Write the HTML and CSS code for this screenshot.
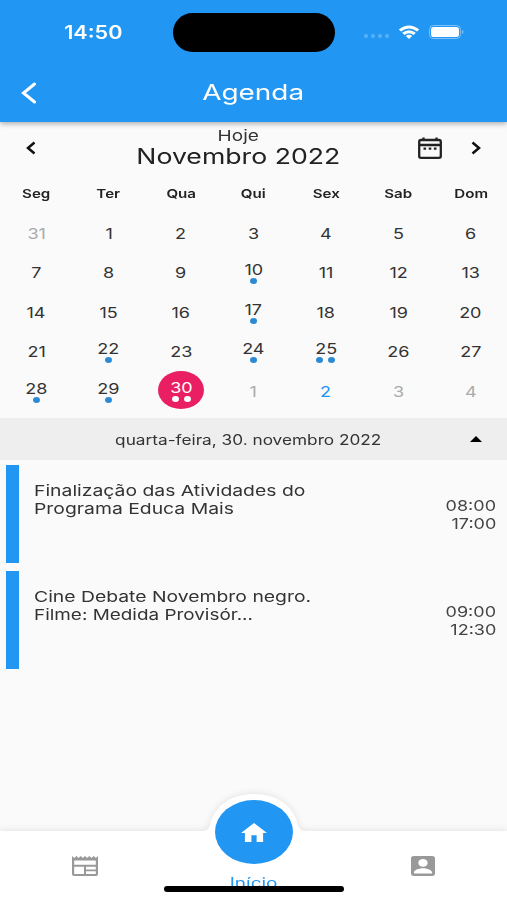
FILE: index.html
```html
<!DOCTYPE html>
<html lang="pt-BR">
<head>
  <meta charset="UTF-8">
  <meta name="viewport" content="width=device-width, initial-scale=1.0">
  <title>Agenda</title>
  <link rel="stylesheet" href="styles.css">
</head>
<body>
  <header class="header">
    <div class="status-bar">
      <div class="clock"><span>14:50</span></div>
      <div class="island"></div>
      <div class="status-icons">
        <div class="signal"><i></i><i></i><i></i><i></i></div>
        <svg class="wifi" viewBox="0 0 22 14" preserveAspectRatio="none">
          <path d="M0.8 4.5Q11 -3.5 21.2 4.5L19 6.6Q11 0.4 3 6.6Z" />
          <path d="M4.2 7.8Q11 2.6 17.8 7.8L15.6 9.9Q11 6.5 6.4 9.9Z" />
          <path d="M7.8 11Q11 8.6 14.2 11L11 14Z" />
        </svg>
        <svg class="battery" viewBox="0 0 35 14">
          <rect class="battery-case" x="0.5" y="0.5" width="31" height="13" rx="4" />
          <rect x="2" y="2" width="28" height="10" rx="2.8" />
          <path class="battery-tip" d="M33 5v4q1.5-.6 1.5-2T33 5z" />
        </svg>
      </div>
    </div>
    <div class="app-bar">
      <svg class="back" viewBox="0 0 16 22"><path d="M13.5 2L2.5 11L13.5 20" /></svg>
      <h1><span>Agenda</span></h1>
    </div>
  </header>

  <main>
    <section class="month-bar">
      <svg class="arrow" viewBox="0 0 10 14"><path d="M8.5 1.5L2 7L8.5 12.5" /></svg>
      <div class="month">
        <p class="today"><span>Hoje</span></p>
        <h2><span>Novembro 2022</span></h2>
      </div>
      <svg class="calendar-icon" viewBox="0 0 24 22">
        <path d="M3 3h18q1.8 0 1.8 1.8v14.4q0 1.6-1.8 1.6H3q-1.8 0-1.8-1.6V4.8Q1.2 3 3 3zM1.2 8h21.6M5.5 0.5v3M18.5 0.5v3" />
        <path class="fill" d="M5.5 10.5h2.6v2.2H5.5zM10.7 10.5h2.6v2.2h-2.6zM15.9 10.5h2.6v2.2h-2.6z" />
      </svg>
      <svg class="arrow" viewBox="0 0 10 14"><path d="M1.5 1.5L8 7L1.5 12.5" /></svg>
    </section>

    <section class="week-days">
      <span>Seg</span><span>Ter</span><span>Qua</span><span>Qui</span><span>Sex</span><span>Sab</span><span>Dom</span>
    </section>

    <section class="days">
      <div class="day out"><span>31</span></div>
      <div class="day"><span>1</span></div>
      <div class="day"><span>2</span></div>
      <div class="day"><span>3</span></div>
      <div class="day"><span>4</span></div>
      <div class="day"><span>5</span></div>
      <div class="day"><span>6</span></div>

      <div class="day"><span>7</span></div>
      <div class="day"><span>8</span></div>
      <div class="day"><span>9</span></div>
      <div class="day"><span>10</span><div class="dots"><i></i></div></div>
      <div class="day"><span>11</span></div>
      <div class="day"><span>12</span></div>
      <div class="day"><span>13</span></div>

      <div class="day"><span>14</span></div>
      <div class="day"><span>15</span></div>
      <div class="day"><span>16</span></div>
      <div class="day"><span>17</span><div class="dots"><i></i></div></div>
      <div class="day"><span>18</span></div>
      <div class="day"><span>19</span></div>
      <div class="day"><span>20</span></div>

      <div class="day"><span>21</span></div>
      <div class="day"><span>22</span><div class="dots"><i></i></div></div>
      <div class="day"><span>23</span></div>
      <div class="day"><span>24</span><div class="dots"><i></i></div></div>
      <div class="day"><span>25</span><div class="dots"><i></i><i></i></div></div>
      <div class="day"><span>26</span></div>
      <div class="day"><span>27</span></div>

      <div class="day"><span>28</span><div class="dots"><i></i></div></div>
      <div class="day"><span>29</span><div class="dots"><i></i></div></div>
      <div class="day selected"><span>30</span><div class="dots"><i></i><i></i></div></div>
      <div class="day out"><span>1</span></div>
      <div class="day now"><span>2</span></div>
      <div class="day out"><span>3</span></div>
      <div class="day out"><span>4</span></div>
    </section>

    <section class="date-bar">
      <p><span>quarta-feira, 30. novembro 2022</span></p>
      <svg class="collapse" viewBox="0 0 12 6" preserveAspectRatio="none"><path d="M0 6L6 0L12 6z" /></svg>
    </section>

    <section class="events">
      <article class="event">
        <p class="event-title"><span>Finalização das Atividades do</span><span>Programa Educa Mais</span></p>
        <p class="event-time"><span>08:00</span><span>17:00</span></p>
      </article>
      <article class="event">
        <p class="event-title"><span>Cine Debate Novembro negro.</span><span class="tight">Filme: Medida Provisór...</span></p>
        <p class="event-time"><span>09:00</span><span>12:30</span></p>
      </article>
    </section>
  </main>

  <nav class="bottom-nav">
    <svg class="nav-shape" viewBox="0 0 507 106">
      <path d="M0 37H203Q208 37 210 31C214 12 231 0 254 0S294 12 298 31Q300 37 305 37H507V106H0Z" />
    </svg>
    <a class="nav-item">
      <svg class="news-icon" viewBox="0 0 26 20">
        <path d="M0 0l2.2 2L4.4 0l2.1 2L8.7 0l2.1 2L13 0l2.2 2L17.3 0l2.2 2L21.6 0l2.2 2L26 0v18q0 2-2 2H2q-2 0-2-2zM2.2 4.5v4.2h21.600v-4.200zM2.200 10.700v7.300h9.800v-7.300zM14 10.700v2.700h9.800v-2.700zM14 15.300v2.700h9.800v-2.700z" />
      </svg>
    </a>
    <a class="nav-home">
      <div class="home-button">
        <svg viewBox="2 3 20 17" preserveAspectRatio="none"><path d="M10 20v-6h4v6h5v-8h3L12 3 2 12h3v8z" /></svg>
      </div>
      <span>Início</span>
    </a>
    <a class="nav-item">
      <svg class="account-icon" viewBox="3 3 18 18" preserveAspectRatio="none">
        <path d="M3 5v14c0 1.1.89 2 2 2h14c1.1 0 2-.9 2-2V5c0-1.1-.9-2-2-2H5c-1.11 0-2 .9-2 2zm12.500 4.200c0 1.900-1.600 3.400-3.500 3.400s-3.500-1.500-3.500-3.400 1.600-3.400 3.500-3.400 3.500 1.500 3.500 3.400zM5.200 18c0-2.500 4.300-3.900 6.800-3.900s6.800 1.400 6.800 3.900v.8H5.200z" />
      </svg>
    </a>
    <div class="home-indicator"></div>
  </nav>
</body>
</html>
```

FILE: styles.css
```css
* {
  margin: 0;
  padding: 0;
  box-sizing: border-box;
}

body {
  width: 507px;
  height: 900px;
  overflow: hidden;
  display: flex;
  flex-direction: column;
  background-color: #fafafa;
  color: #333;
  font-family: Inter, "Open Sans", sans-serif;
}

svg {
  display: block;
  flex: none;
}

/* the type is wide, so the text is stretched sideways */
span {
  display: inline-block;
  white-space: nowrap;
  transform: scaleX(1.2);
}

.header {
  height: 122px;
  flex: none;
  background-color: #2196f3;
  color: #fff;
  box-shadow: 0 2px 5px rgba(0, 0, 0, 0.3);
  z-index: 1;
}

.status-bar {
  height: 64px;
  display: grid;
  grid-template-columns: 173px 162px 172px;
  align-items: center;
}

.clock {
  padding-left: 13px;
  text-align: center;
  font-size: 18px;
  font-weight: 600;
}

.island {
  height: 39px;
  border-radius: 20px;
  background-color: #000;
}

.status-icons {
  display: flex;
  align-items: center;
  padding-left: 29px;
  fill: #fff;
}

.signal {
  display: flex;
  gap: 3px;
  margin: 8px 9px 0 0;
}

.signal i {
  width: 4px;
  height: 4px;
  border-radius: 50%;
  background-color: #59b1f7;
}

.wifi {
  width: 22px;
  height: 14px;
  margin-right: 9px;
}

.battery {
  width: 35px;
  height: 14px;
}

.battery-case {
  fill: none;
  stroke: #80c2f8;
}

.battery-tip {
  fill: #80c2f8;
}

.app-bar {
  height: 58px;
  display: grid;
  grid-template-columns: 57px 1fr 57px;
  align-items: center;
}

.back {
  width: 16px;
  height: 22px;
  margin-left: 21px;
  fill: none;
  stroke: #fff;
  stroke-width: 3;
  stroke-linecap: round;
}

.app-bar h1 {
  margin-top: -2px;
  text-align: center;
  font-size: 22px;
  font-weight: 400;
}

.app-bar span {
  transform: scaleX(1.27);
}

.month-bar {
  height: 52px;
  display: flex;
  align-items: center;
  padding: 0 26px;
}

.arrow {
  width: 10px;
  height: 14px;
  fill: none;
  stroke: #111;
  stroke-width: 2.5;
}

.month {
  flex: 1;
  padding-left: 46px;
  margin: -2px 23px 0 0;
  text-align: center;
}

.today {
  font-size: 15px;
  line-height: 19px;
}

.today span {
  transform: scaleX(1.27);
}

.month h2 {
  font-size: 21px;
  line-height: 24px;
  font-weight: 400;
  color: #222;
}

.month h2 span {
  transform: scaleX(1.27);
}

.calendar-icon {
  width: 24px;
  height: 22px;
  margin-right: 29px;
  fill: none;
  stroke: #222;
  stroke-width: 2.3;
}

.calendar-icon .fill {
  fill: #222;
  stroke: none;
}

.week-days {
  height: 39px;
  display: grid;
  grid-template-columns: repeat(7, 1fr);
  align-items: center;
  text-align: center;
  font-size: 12px;
  font-weight: 600;
  color: #222;
}

.week-days span {
  transform: scaleX(1.26);
}

.days {
  display: grid;
  grid-template-columns: repeat(7, 1fr);
  grid-auto-rows: 39.5px;
  padding-bottom: 7.5px;
}

.day {
  display: flex;
  flex-direction: column;
  align-items: center;
  justify-content: center;
  font-size: 15px;
  line-height: 18px;
}

.day span {
  transform: translateY(1px) scaleX(1.2);
}

.dots {
  display: flex;
  justify-content: center;
  gap: 5px;
}

.dots i {
  width: 7px;
  height: 6px;
  border-radius: 50%;
  background-color: #2c8ad4;
}

.out {
  color: #aaa;
}

.now {
  color: #2196f3;
}

.selected {
  width: 46px;
  height: 38px;
  margin-top: -2px;
  justify-self: center;
  align-self: center;
  border-radius: 50%;
  background-color: #e91e63;
  color: #fff;
}

.selected .dots i {
  background-color: #fff;
}

.date-bar {
  height: 42px;
  display: flex;
  align-items: center;
  padding: 0 25px 0 27px;
  background-color: #eee;
}

.date-bar p {
  flex: 1;
  text-align: center;
  font-size: 14px;
}

.date-bar span {
  transform: scaleX(1.23);
}

.collapse {
  width: 12px;
  height: 6px;
}

.events {
  display: flex;
  flex-direction: column;
  gap: 8px;
  padding: 5px 11px 0 6px;
}

.event {
  height: 98px;
  display: flex;
  justify-content: space-between;
  border-left: 13px solid #2196f3;
  padding: 17px 0 0 15px;
  font-size: 15px;
  line-height: 18px;
}

.event-title,
.event-time {
  display: flex;
  flex-direction: column;
  align-items: flex-start;
}

.event-title span {
  transform: scaleX(1.29);
  transform-origin: left;
}

.event-title .tight {
  transform: scaleX(1.26);
}

.event-time {
  align-items: flex-end;
  padding-top: 15px;
  color: #444;
}

.event-time span {
  transform-origin: right;
}

.bottom-nav {
  position: relative;
  margin-top: auto;
  height: 69px;
  display: grid;
  grid-template-columns: repeat(3, 169px);
}

.nav-shape {
  position: absolute;
  left: 0;
  bottom: 0;
  width: 507px;
  height: 106px;
  overflow: visible;
  fill: #fff;
  filter: drop-shadow(0 -1px 3px rgba(0, 0, 0, 0.09));
}

.nav-item {
  position: relative;
  display: flex;
  justify-content: center;
  padding-top: 25px;
  fill: #999;
}

.news-icon {
  width: 26px;
  height: 20px;
  fill-rule: evenodd;
}

.account-icon {
  width: 24px;
  height: 20px;
}

.nav-home {
  position: relative;
  display: flex;
  flex-direction: column;
  align-items: center;
  color: #2196f3;
  font-size: 14px;
  line-height: 20px;
}

.nav-home span {
  transform: scaleX(1.36);
}

.home-button {
  width: 78px;
  height: 64px;
  flex: none;
  margin: -31px 0 9px 1px;
  display: flex;
  align-items: center;
  justify-content: center;
  border-radius: 50%;
  background-color: #2196f3;
  fill: #fff;
}

.home-button svg {
  width: 26px;
  height: 19px;
}

.home-indicator {
  position: absolute;
  left: 164px;
  bottom: 8px;
  width: 180px;
  height: 6px;
  border-radius: 3px;
  background-color: #000;
}
```
